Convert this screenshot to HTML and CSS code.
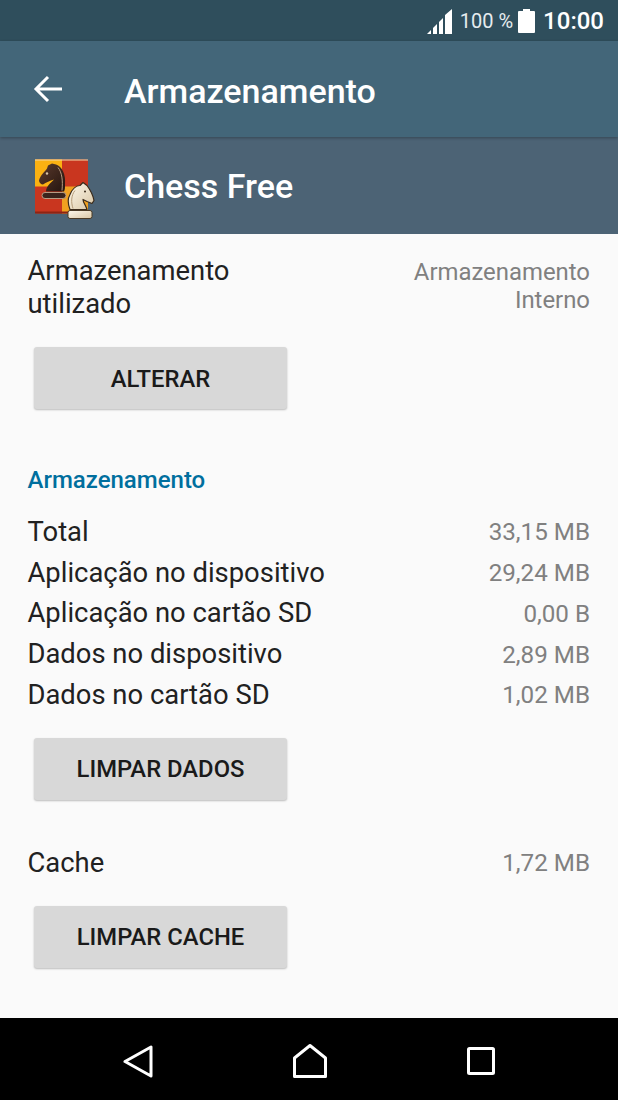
FILE: index.html
```html
<!DOCTYPE html>
<html lang="pt">
<head>
  <meta charset="UTF-8">
  <title>Armazenamento</title>
  <link rel="stylesheet" href="styles.css">
</head>
<body>

  <div class="phone">
    <div class="statusbar">
      <svg class="signal" width="26" height="26" viewBox="0 0 26 26">
        <path d="M0 25 L4 21 V25 Z M6 25 V19 L10 15 V25 Z M12 25 V13 L16 9 V25 Z M18 25 V6 L25 0 V25 Z" fill="#fff"/>
      </svg>
      <span class="battery-text">100 %</span>
      <svg class="battery" width="17" height="24" viewBox="0 0 17 24">
        <path d="M5 0 H12 V2 H16 A1 1 0 0 1 17 3 V23 A1 1 0 0 1 16 24 H1 A1 1 0 0 1 0 23 V3 A1 1 0 0 1 1 2 H5 Z" fill="#fff"/>
      </svg>
      <span class="clock">10:00</span>
    </div>

    <div class="appbar">
      <svg class="back" width="30" height="30" viewBox="0 0 30 30">
        <path d="M29 15 H3 M15 3 L3 15 L15 27" fill="none" stroke="#fff" stroke-width="3"/>
      </svg>
      <h1>Armazenamento</h1>
    </div>

    <div class="apphead">
      <svg class="appicon" width="64" height="66" viewBox="0 0 64 66">
        <defs>
          <linearGradient id="blackPiece" x1="0" y1="0" x2="1" y2="1">
            <stop offset="0" stop-color="#5a3a2c"/>
            <stop offset="1" stop-color="#24140f"/>
          </linearGradient>
          <linearGradient id="whitePiece" x1="0" y1="0" x2="1" y2="1">
            <stop offset="0" stop-color="#fdf8ec"/>
            <stop offset="1" stop-color="#d9c6a4"/>
          </linearGradient>
        </defs>
        <g transform="translate(0 1.5)">
          <rect x="2" y="5" width="53" height="54" rx="2" fill="#c9361f"/>
          <rect x="2" y="5" width="27" height="27" fill="#fbb112"/>
          <rect x="29" y="32" width="26" height="27" fill="#f0a020"/>
          <rect x="2" y="5" width="53" height="1" fill="#f6d9a8"/>
          <rect x="2" y="57" width="53" height="2" fill="#8e2414"/>
          <path d="M19 9 L23 10 C29 12 33 20 32 30 C32 33 32 35 31 37 H13 C13 32 18 28 21 25 C17 26 13 28 10 30 C8 30 6 28 6 26 C7 21 12 17 14 14 L15 11 Z" fill="url(#blackPiece)"/>
          <path d="M25 13 C29 18 30 26 29 36" fill="none" stroke="#b89c82" stroke-width="1"/>
          <circle cx="14" cy="19" r="1.2" fill="#d8c4a8"/>
          <rect x="9" y="38" width="24" height="6" rx="3" fill="#3a241c" stroke="#b89c82" stroke-width="1"/>
          <path d="M50 28 L54 31 C57 35 60 41 61 46 L59 49 L54 47 L50 45 C50 48 53 51 54 55 H37 C35 50 34 45 37 40 C39 35 43 31 47 31 Z" fill="url(#whitePiece)" stroke="#3a2a1a" stroke-width="1.2" stroke-linejoin="round"/>
          <path d="M42 36 C38 41 38 48 40 54" fill="none" stroke="#b59c78" stroke-width="1"/>
          <circle cx="52" cy="37" r="1" fill="#3a2a1a"/>
          <rect x="35" y="56" width="24" height="8" rx="2" fill="url(#whitePiece)" stroke="#4a3a25" stroke-width="1"/>
        </g>
      </svg>
      <span class="appname">Chess Free</span>
    </div>

    <div class="content">
      <div class="used">
        <div class="used-label">Armazenamento utilizado</div>
        <div class="used-value">Armazenamento<br>Interno</div>
      </div>
      <button class="btn">ALTERAR</button>

      <h2>Armazenamento</h2>
      <div class="rows">
        <div class="row"><span>Total</span><span class="val">33,15 MB</span></div>
        <div class="row"><span>Aplicação no dispositivo</span><span class="val">29,24 MB</span></div>
        <div class="row"><span>Aplicação no cartão SD</span><span class="val">0,00 B</span></div>
        <div class="row"><span>Dados no dispositivo</span><span class="val">2,89 MB</span></div>
        <div class="row"><span>Dados no cartão SD</span><span class="val">1,02 MB</span></div>
      </div>
      <button class="btn btn-tight">LIMPAR DADOS</button>

      <div class="row cache"><span>Cache</span><span class="val">1,72 MB</span></div>
      <button class="btn btn-tight">LIMPAR CACHE</button>
    </div>

    <div class="navbar">
      <svg width="30" height="33" viewBox="0 0 30 33">
        <path d="M2 16.5 L28 2 V31 Z" fill="none" stroke="#fff" stroke-width="3" stroke-linejoin="round"/>
      </svg>
      <svg width="34" height="34" viewBox="0 0 34 34">
        <path d="M1.5 32.5 V14 L17 1.5 L32.5 14 V32.5 Z" fill="none" stroke="#fff" stroke-width="3" stroke-linejoin="round"/>
      </svg>
      <svg width="28" height="28" viewBox="0 0 28 28">
        <rect x="1.5" y="1.5" width="25" height="25" rx="1" fill="none" stroke="#fff" stroke-width="3"/>
      </svg>
    </div>
  </div>

</body>
</html>
```

FILE: styles.css
```css
* {
  box-sizing: border-box;
}

body {
  margin: 0;
  font-family: Roboto, "Noto Sans", sans-serif;
  background: #fafafa;
}

.phone {
  width: 618px;
  height: 1100px;
  display: flex;
  flex-direction: column;
  overflow: hidden;
}

.statusbar {
  height: 41px;
  background: #2f4e5c;
  color: #fff;
  display: flex;
  align-items: center;
  justify-content: flex-end;
  padding-right: 14px;
}

.signal {
  margin-right: 7px;
  margin-top: 2px;
}

.battery-text {
  font-size: 20px;
  color: #e6ecef;
  margin-right: 5px;
}

.battery {
  margin-right: 8px;
}

.clock {
  font-size: 24px;
  font-weight: 500;
}

.appbar {
  height: 96px;
  background: #436679;
  display: flex;
  align-items: center;
  padding-left: 33px;
  box-shadow: 0 1px 3px rgba(0, 0, 0, 0.3);
  position: relative;
}

.back {
  margin-right: 61px;
}

h1 {
  margin: 0;
  font-size: 34px;
  font-weight: 500;
  color: #fff;
  padding-top: 3px;
}

.apphead {
  height: 97px;
  background: #4c6375;
  display: flex;
  align-items: center;
  padding-left: 33px;
}

.appicon {
  margin-right: 27px;
}

.appname {
  font-size: 34px;
  font-weight: 500;
  color: #fff;
}

.content {
  flex: 1;
  padding: 21px 28px 0 27.5px;
  color: #212121;
  font-size: 27.4px;
}

.used {
  display: flex;
  justify-content: space-between;
}

.used-label {
  width: 260px;
  line-height: 33px;
}

.used-value {
  text-align: right;
  font-size: 23.9px;
  line-height: 28px;
  color: #808080;
  padding-top: 3px;
}

.btn {
  display: block;
  width: 253px;
  height: 62px;
  margin: 26px 0 0 6.5px;
  background: #d8d8d8;
  border: 0;
  border-radius: 3px;
  box-shadow: 0 1px 2px rgba(0, 0, 0, 0.25);
  font-family: inherit;
  font-size: 23.8px;
  font-weight: 500;
  color: #1a1a1a;
  padding-top: 2px;
}

.btn-tight {
  margin-top: 23px;
}

h2 {
  margin: 57px 0 0;
  font-size: 24px;
  line-height: 28px;
  font-weight: 500;
  color: #006f9e;
}

.rows {
  margin-top: 17px;
}

.row {
  display: flex;
  justify-content: space-between;
  align-items: center;
  height: 40.75px;
  padding-top: 1px;
}

.val {
  font-size: 24.2px;
  color: #808080;
  padding-top: 1px;
}

.cache {
  margin-top: 42px;
}

.navbar {
  height: 82px;
  background: #000;
  display: flex;
  align-items: center;
  justify-content: space-between;
  padding: 4px 123px 0;
}
```
